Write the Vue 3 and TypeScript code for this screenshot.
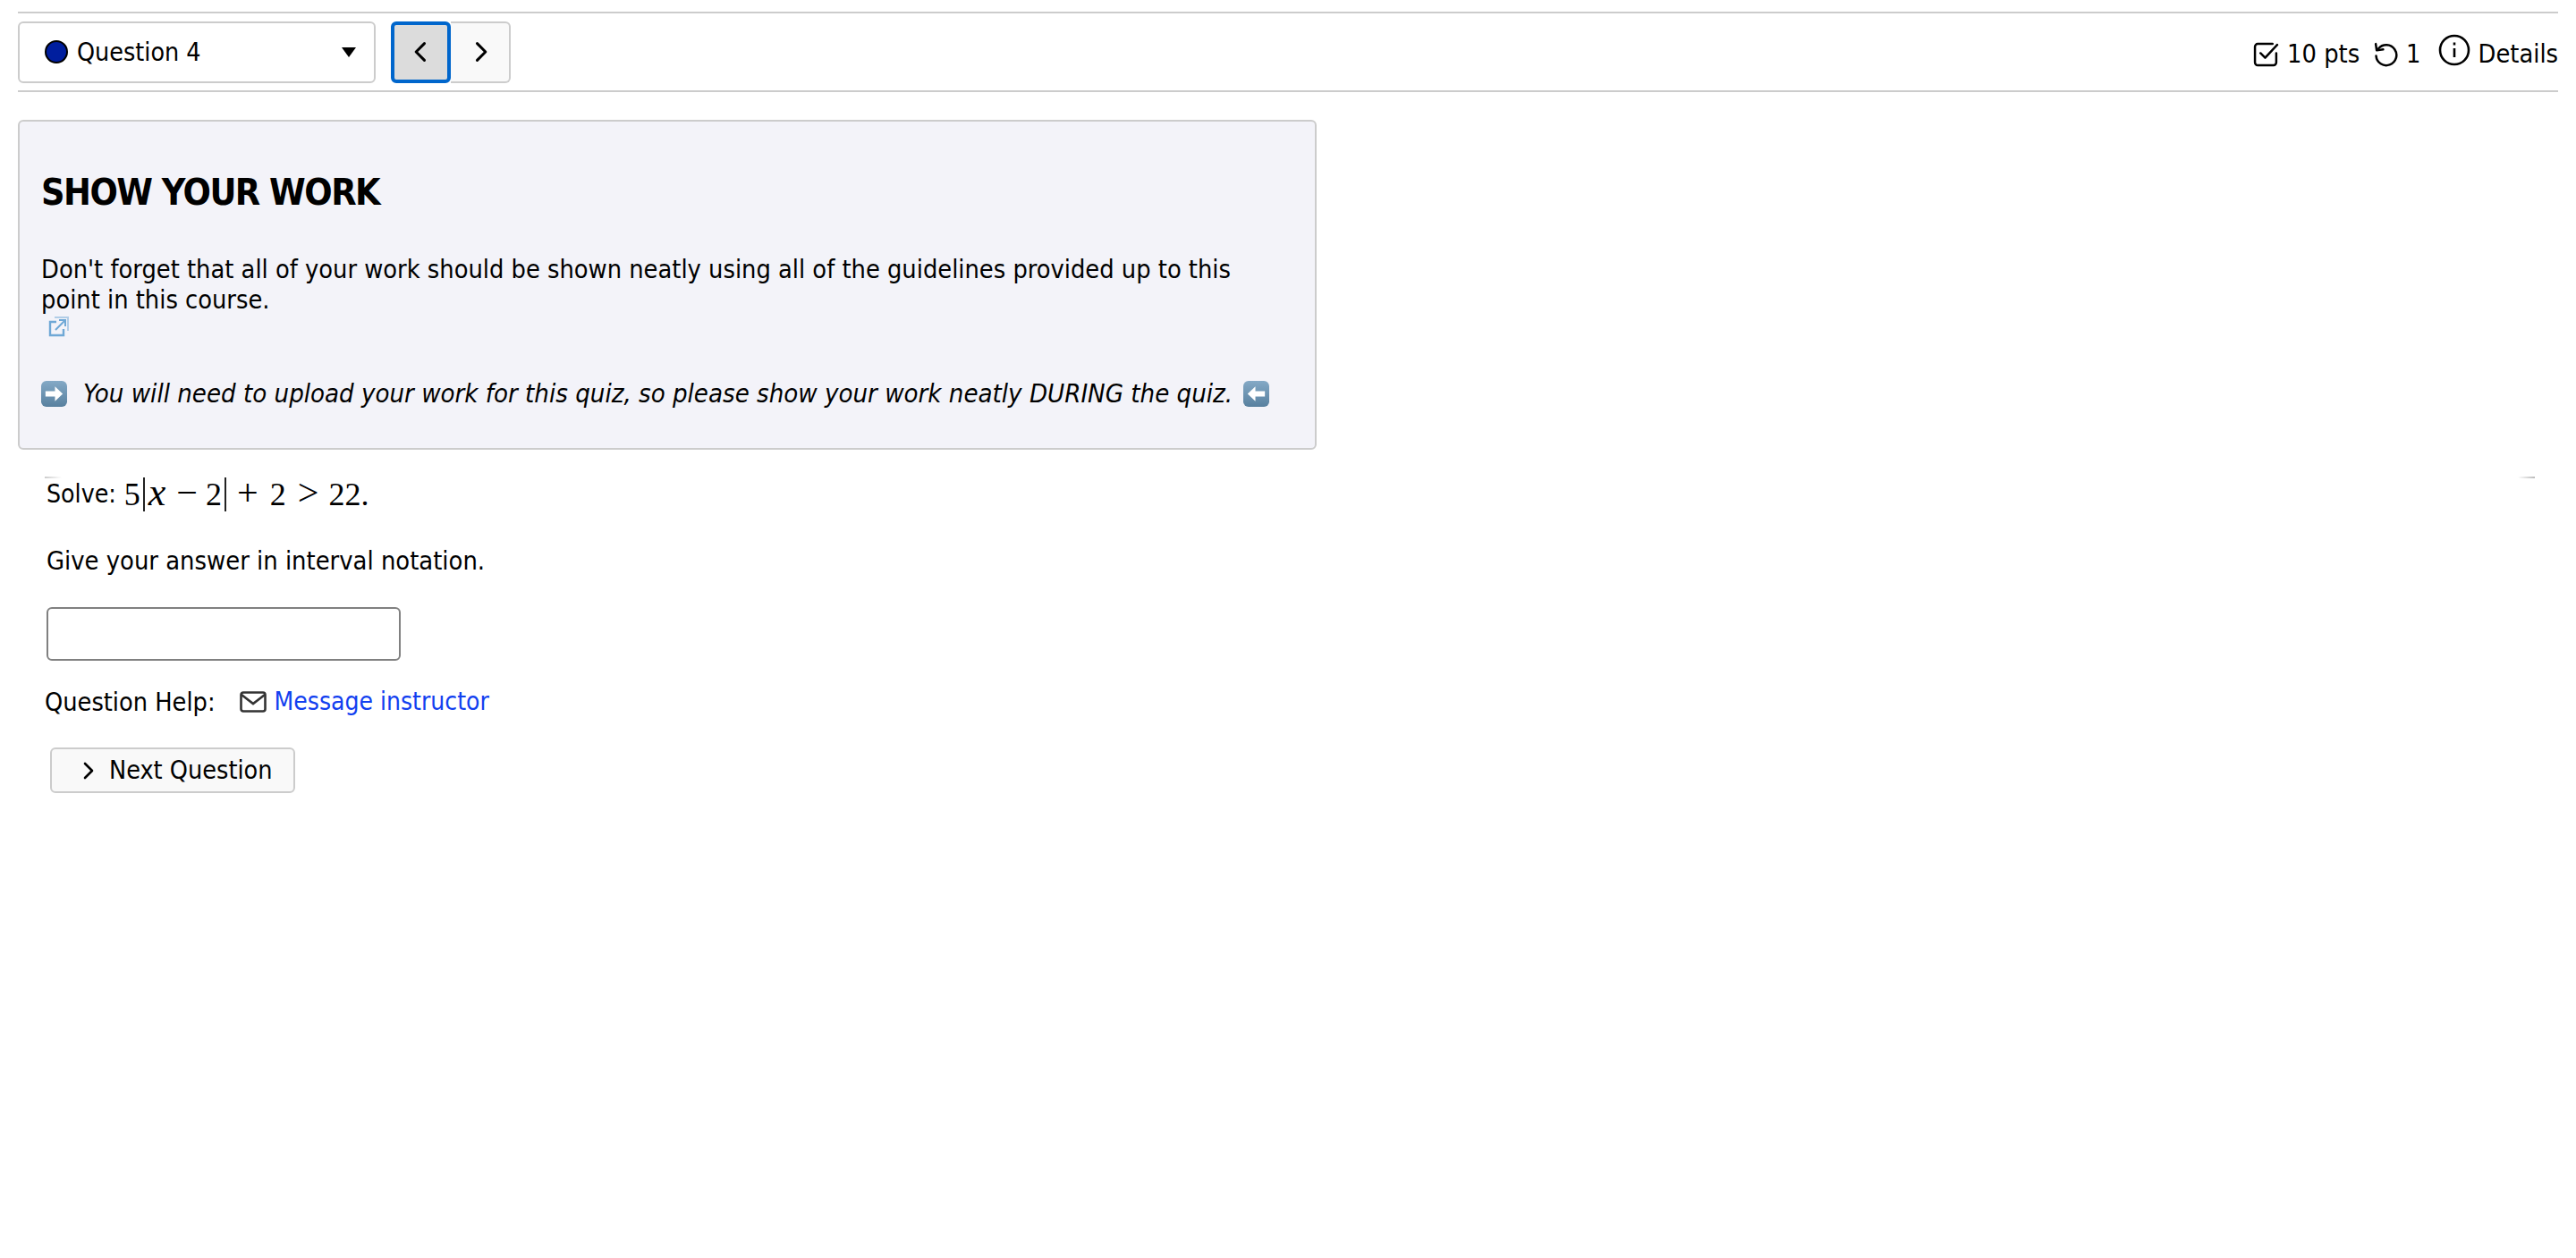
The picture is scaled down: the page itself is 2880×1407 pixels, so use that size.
<script setup lang="ts">
const answer = '';
</script>

<template>
  <div class="page">
    <header class="nav">
      <div class="nav-left">
        <div class="select">
          <span class="dot"></span>
          <span class="select-label">Question 4</span>
          <span class="caret"></span>
        </div>
        <div class="pager">
          <button class="page-btn active" aria-label="Previous">
            <svg viewBox="0 0 24 24" class="chev"><path d="M15 4l-8 8 8 8" /></svg>
          </button>
          <button class="page-btn" aria-label="Next">
            <svg viewBox="0 0 24 24" class="chev"><path d="M9 4l8 8-8 8" /></svg>
          </button>
        </div>
      </div>
      <div class="nav-right">
        <svg viewBox="0 0 28 28" class="meta-icon">
          <path d="M25 13v10a3 3 0 0 1-3 3H5a3 3 0 0 1-3-3V6a3 3 0 0 1 3-3h16" />
          <path d="M8 13l5 5L26 4" />
        </svg>
        <span class="meta">10 pts</span>
        <svg viewBox="0 0 28 28" class="meta-icon retry">
          <path d="M6 8a11 11 0 1 1-2.6 8" />
          <path d="M3 3l1 7 7-1" />
        </svg>
        <span class="meta">1</span>
        <svg viewBox="0 0 36 36" class="info">
          <circle cx="18" cy="18" r="16" />
          <path d="M18 16v10" />
          <path d="M18 9.500v3" />
        </svg>
        <span class="meta last">Details</span>
      </div>
    </header>

    <section class="panel">
      <h2 class="panel-title">SHOW YOUR WORK</h2>
      <p class="panel-text">
        Don't forget that all of your work should be shown neatly using all of the guidelines provided up to this point in this course.
        <svg viewBox="0 0 24 24" class="ext">
          <path d="M9 7H2v15h15v-7" stroke-width="2.4" />
          <path d="M7 2h15v15" opacity=".5" />
          <path d="M8 16L19 5M12 5h7v7" />
        </svg>
      </p>
      <p class="panel-note">
        <svg viewBox="0 0 30 30" class="emoji">
          <defs>
            <linearGradient id="keycap" x1="0" y1="0" x2="0" y2="1">
              <stop offset="0" stop-color="#84a9c6" />
              <stop offset="1" stop-color="#58809f" />
            </linearGradient>
          </defs>
          <rect width="30" height="30" rx="6" fill="url(#keycap)" />
          <path d="M5 12h11V6.500l9 8.500-9 8.500V18H5z" fill="#fff" />
        </svg>
        <em class="note-text">You will need to upload your work for this quiz, so please show your work neatly DURING the quiz.</em>
        <svg viewBox="0 0 30 30" class="emoji">
          <rect width="30" height="30" rx="6" fill="url(#keycap)" />
          <path d="M25 12H14V6.500L5 15l9 8.500V18h11z" fill="#fff" />
        </svg>
      </p>
    </section>

    <main class="question">
      <div class="fade-rule">
        <span class="fade left"></span>
        <span class="fade right"></span>
      </div>
      <p class="solve">
        <span class="solve-label">Solve:</span>
        <span class="math">5<i class="bar"></i><i class="var">x</i><span class="op">−</span>2<i class="bar"></i><span class="op plus">+</span>2<span class="op rel">&gt;</span>22.</span>
      </p>
      <p class="prompt">Give your answer in interval notation.</p>
      <input class="answer" type="text" :value="answer" />
      <div class="help">
        <span class="help-label">Question Help:</span>
        <svg viewBox="0 0 30 24" class="mail">
          <rect x="1.500" y="1.500" width="27" height="21" rx="2.500" />
          <path d="M2 4l13 10L28 4" />
        </svg>
        <a class="link" href="#">Message instructor</a>
      </div>
      <button class="next">
        <svg viewBox="0 0 24 24" class="chev small"><path d="M9 4l8 8-8 8" /></svg>
        Next Question
      </button>
    </main>
  </div>
</template>

<style scoped>
.page {
  font-family: "DejaVu Sans Condensed", "DejaVu Sans", sans-serif;
  font-size: 28.700px;
  line-height: 34px;
  color: #000;
  padding: 13px 20px 0;
  min-height: 1394px;
  background: #fff;
}
.nav {
  display: flex;
  justify-content: space-between;
  align-items: center;
  height: 86px;
  border-top: 2px solid #ccc;
  border-bottom: 2px solid #ccc;
}
.nav-left {
  display: flex;
  align-items: center;
  gap: 17px;
}
.select {
  width: 400px;
  height: 69px;
  box-sizing: border-box;
  border: 2px solid #ccc;
  border-radius: 6px;
  display: flex;
  align-items: center;
  padding: 0 20px 0 28px;
}
.dot {
  width: 22px;
  height: 22px;
  border-radius: 50%;
  background: #001e9e;
  border: 2px solid #000;
  margin-right: 10px;
}
.select-label {
  flex: 1;
  font-size: 28.400px;
  padding-top: 2px;
}
.caret {
  width: 0;
  height: 0;
  border-left: 8px solid transparent;
  border-right: 8px solid transparent;
  border-top: 11px solid #000;
}
.pager {
  display: flex;
}
.page-btn {
  width: 67px;
  height: 69px;
  padding: 0;
  background: #f9f9f9;
  border: 2px solid #ccc;
  border-radius: 0 6px 6px 0;
  border-left: none;
  display: flex;
  align-items: center;
  justify-content: center;
}
.page-btn.active {
  background: #dcdcdc;
  border: 4px solid #0066cc;
  border-radius: 6px;
}
.chev {
  width: 28px;
  height: 28px;
  fill: none;
  stroke: #000;
  stroke-width: 2.600;
  stroke-linecap: round;
  stroke-linejoin: round;
}
.chev.small {
  width: 24px;
  height: 24px;
}
.nav-right {
  display: flex;
  align-items: center;
  padding-top: 4px;
}
.meta-icon {
  width: 29px;
  height: 29px;
  fill: none;
  stroke: #000;
  stroke-width: 2.400;
  stroke-linecap: round;
  stroke-linejoin: round;
  margin-right: 9px;
}
.retry {
  margin-left: 15px;
  margin-right: 8px;
}
.info {
  width: 36px;
  height: 36px;
  fill: none;
  stroke: #000;
  stroke-width: 2.600;
  margin-left: 19px;
  margin-right: 9px;
  margin-top: -8px;
}
.panel {
  margin-top: 31px;
  width: 1452px;
  height: 369px;
  box-sizing: border-box;
  background: #f3f3f9;
  border: 2px solid #ccc;
  border-radius: 6px;
  padding: 54px 24px 0;
}
.panel-title {
  margin: 0;
  font-size: 41px;
  letter-spacing: -1.500px;
  line-height: 50px;
  font-weight: 700;
}
.panel-text {
  margin: 44px 0 0;
}
.ext {
  display: block;
  width: 24px;
  height: 24px;
  margin: 1px 0 0 8px;
  fill: none;
  stroke: #6fa8d6;
  stroke-width: 2;
}
.panel-note {
  margin: 46px 0 0;
  display: flex;
  align-items: center;
}
.emoji {
  width: 29px;
  height: 29px;
  flex: none;
}
.note-text {
  font-size: 29.100px;
  margin: 0 12px 0 18px;
}
.question {
  padding-left: 32px;
}
.fade-rule {
  display: flex;
  justify-content: space-between;
  margin: 30px 26px 0 -2px;
}
.fade {
  width: 19px;
  height: 2px;
}
.fade.left {
  background: linear-gradient(to right, #ccc, #fff);
}
.fade.right {
  background: linear-gradient(to right, #fff, #bbb);
}
.solve {
  margin: 1px 0 0;
  height: 34px;
  display: flex;
  align-items: center;
  gap: 9px;
}
.solve-label {
  font-size: 28.200px;
}
.math {
  font-family: "Liberation Serif", serif;
  font-size: 36px;
  display: inline-flex;
  align-items: baseline;
}
.var {
  font-style: italic;
  font-size: 44px;
  margin: 0 3px 0 1px;
}
.bar {
  display: inline-block;
  align-self: center;
  width: 2px;
  height: 38px;
  background: #222;
  margin: 0 3px;
}
.op {
  font-size: 42px;
  margin: 0 9px;
}
.op.plus {
  margin-right: 13px;
}
.op.rel {
  margin: 0 11px 0 13px;
}
.prompt {
  margin: 40px 0 0;
  font-size: 28.800px;
}
.answer {
  display: block;
  width: 396px;
  height: 60px;
  box-sizing: border-box;
  margin-top: 35px;
  border: 2px solid #808080;
  border-radius: 6px;
  background: #fff;
}
.help {
  display: flex;
  align-items: center;
  margin: 29px 0 0 -2px;
}
.help-label {
  font-size: 28.600px;
}
.mail {
  width: 30px;
  height: 24px;
  margin: 0 9px 0 27px;
  fill: none;
  stroke: #333;
  stroke-width: 2.600;
}
.link {
  color: #1240f0;
  font-size: 28px;
  text-decoration: none;
}
.next {
  display: flex;
  align-items: center;
  gap: 12px;
  margin: 34px 0 0 4px;
  width: 274px;
  height: 51px;
  padding: 0 0 0 28px;
  background: #f9f9f9;
  border: 2px solid #ccc;
  border-radius: 6px;
  font: inherit;
  font-size: 28.500px;
  color: #000;
}
</style>

<style>
html,
body {
  background: #fff;
}
</style>
